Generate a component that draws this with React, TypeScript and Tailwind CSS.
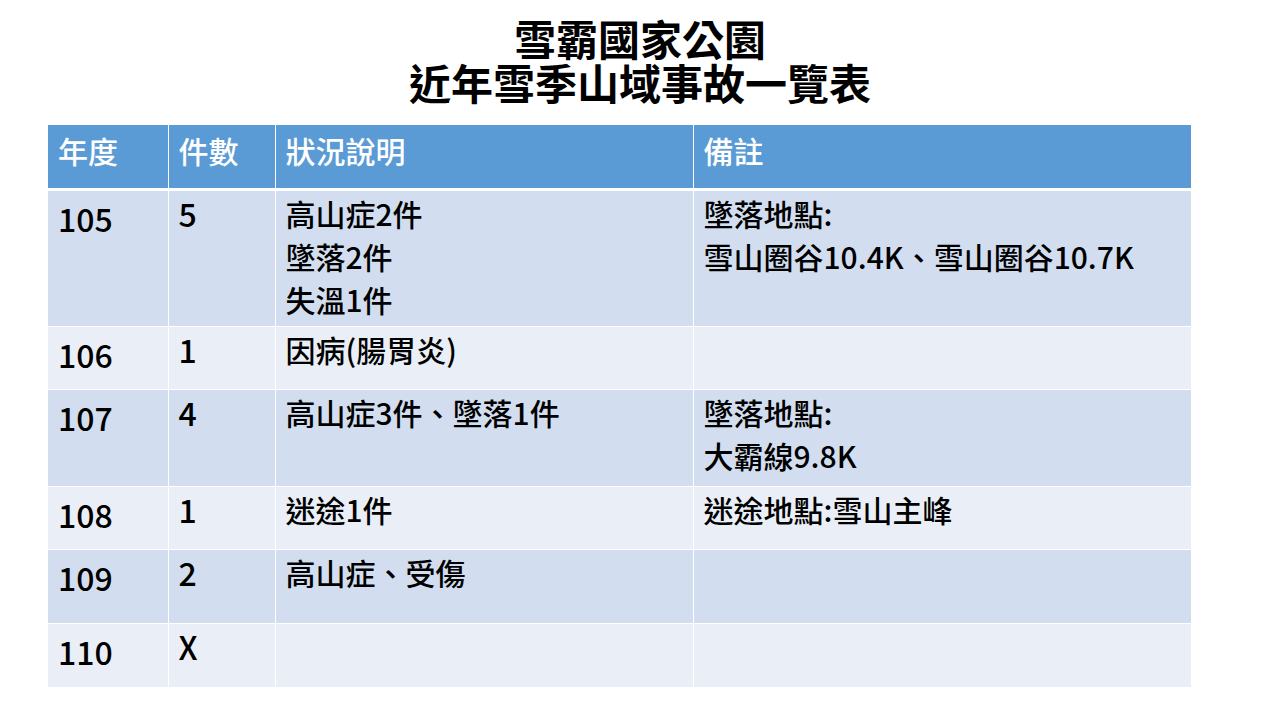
const rows = [
  { year: '105', count: '5', desc: ['高山症2件', '墜落2件', '失溫1件'], note: ['墜落地點:', '雪山圈谷10.4K、雪山圈谷10.7K'], h: 'h-[137px]', bg: 'bg-[#d2deef]' },
  { year: '106', count: '1', desc: ['因病(腸胃炎)'], note: [], h: 'h-[63px]', bg: 'bg-[#eaeff7]' },
  { year: '107', count: '4', desc: ['高山症3件、墜落1件'], note: ['墜落地點:', '大霸線9.8K'], h: 'h-[97px]', bg: 'bg-[#d2deef]' },
  { year: '108', count: '1', desc: ['迷途1件'], note: ['迷途地點:雪山主峰'], h: 'h-[63px]', bg: 'bg-[#eaeff7]' },
  { year: '109', count: '2', desc: ['高山症、受傷'], note: [], h: 'h-[74px]', bg: 'bg-[#d2deef]' },
  { year: '110', count: 'X', desc: [], note: [], h: 'h-[64px]', bg: 'bg-[#eaeff7]' },
]

export default function App() {
  return (
    <div
      className="w-[1280px] h-[720px] bg-white overflow-hidden"
      style={{ fontFamily: '"Noto Sans CJK TC", "Noto Sans", sans-serif' }}
    >
      <h1 className="pt-[16px] text-center text-[42px] leading-[44px] font-bold text-black">
        <div>雪霸國家公園</div>
        <div>近年雪季山域事故一覽表</div>
      </h1>

      <table className="ml-[48px] mt-[21px] border-collapse table-fixed w-[1143px] text-[30px] leading-[43px]">
        <colgroup>
          <col className="w-[120px]" />
          <col className="w-[107px]" />
          <col className="w-[418px]" />
          <col className="w-[498px]" />
        </colgroup>
        <thead>
          <tr className="h-[64px] bg-[#5b9bd5] text-white border-b-[3px] border-white">
            {['年度', '件數', '狀況說明', '備註'].map((t, i) => (
              <th
                key={t}
                className={`align-top text-left font-medium pl-[10px] pt-[4px] ${i > 0 ? 'border-l border-white' : ''}`}
              >
                {t}
              </th>
            ))}
          </tr>
        </thead>
        <tbody>
          {rows.map((r) => (
            <tr key={r.year} className={`${r.h} ${r.bg} border-b border-white text-black font-medium`}>
              <td className="align-top pl-[10px] pt-[6px] text-[32px]">{r.year}</td>
              <td className="align-top pl-[10px] pt-[1px] border-l border-white text-[32px]">{r.count}</td>
              <td className="align-top pl-[10px] pt-[1px] border-l border-white">
                {r.desc.map((d) => (
                  <div key={d}>{d}</div>
                ))}
              </td>
              <td className="align-top pl-[10px] pt-[1px] border-l border-white">
                {r.note.map((d) => (
                  <div key={d}>{d}</div>
                ))}
              </td>
            </tr>
          ))}
        </tbody>
      </table>
    </div>
  )
}
